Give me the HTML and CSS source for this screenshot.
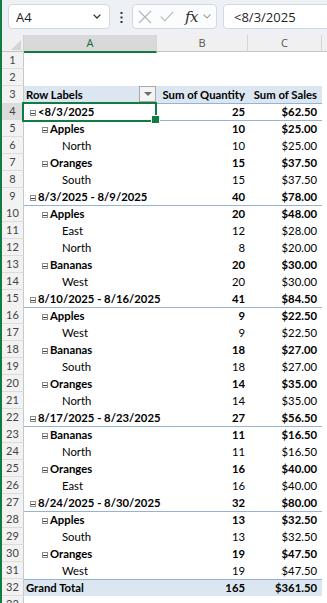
FILE: index.html
```html
<!DOCTYPE html>
<html>
<head>
	<meta http-equiv="content-type" content="text/html; charset=utf-8">
	<meta name="viewport" content="width=device-width, initial-scale=1.0">
	<title>PivotTable</title>
	<link rel="stylesheet" href="styles.css">
</head>
<body>
	<div class="x-bar">
		<div class="x-namebox">
			<span>A4</span>
			<svg width="8" height="5" viewBox="0 0 8 5"><path d="M0.6 0.6 L4 4 L7.4 0.6" fill="none" stroke="#333" stroke-width="1.3"/></svg>
		</div>
		<div class="x-dots">
			<svg width="3" height="11" viewBox="0 0 3 11"><rect x="0.5" y="0" width="2" height="2" fill="#333"/><rect x="0.5" y="4.5" width="2" height="2" fill="#333"/><rect x="0.5" y="9" width="2" height="2" fill="#333"/></svg>
		</div>
		<div class="x-fxbox">
			<svg width="14" height="14" viewBox="0 0 14 14"><path d="M1 1 L13 13 M13 1 L1 13" stroke="#b3b6b9" stroke-width="1.1" fill="none"/></svg>
			<svg width="14" height="11" viewBox="0 0 14 11"><path d="M0.8 5.6 L4.8 9.8 L13.2 0.8" stroke="#b3b6b9" stroke-width="1.1" fill="none"/></svg>
			<span class="x-fx">fx</span>
			<svg width="8" height="5" viewBox="0 0 8 5"><path d="M0.6 0.6 L4 4 L7.4 0.6" fill="none" stroke="#9a9da0" stroke-width="1.1"/></svg>
		</div>
		<div class="x-formula">&lt;8/3/2025</div>
	</div>

	<div class="x-sheet">
		<div class="x-r x-colhead">
			<div class="x-corner"></div>
			<div class="x-ch x-sel">A</div>
			<div class="x-ch">B</div>
			<div class="x-ch">C</div>
			<div class="x-ch x-last"></div>
		</div>

		<div class="x-r"><div class="x-rn">1</div></div>
		<div class="x-r"><div class="x-rn">2</div></div>
		<div class="x-r x-head">
			<div class="x-rn">3</div>
			<div class="x-c x-a">Row Labels<span class="x-filter"></span></div>
			<div class="x-c x-b">Sum of Quantity</div>
			<div class="x-c x-cc">Sum of Sales</div>
		</div>
		<div class="x-r x-l1">
			<div class="x-rn x-rsel">4</div>
			<div class="x-c x-a x-active"><i class="x-tg"></i>&lt;8/3/2025</div>
			<div class="x-c x-b">25</div>
			<div class="x-c x-cc">$62.50</div>
		</div>
		<div class="x-r x-l2"><div class="x-rn">5</div><div class="x-c x-a"><i class="x-tg"></i>Apples</div><div class="x-c x-b">10</div><div class="x-c x-cc">$25.00</div></div>
		<div class="x-r x-l3"><div class="x-rn">6</div><div class="x-c x-a">North</div><div class="x-c x-b">10</div><div class="x-c x-cc">$25.00</div></div>
		<div class="x-r x-l2"><div class="x-rn">7</div><div class="x-c x-a"><i class="x-tg"></i>Oranges</div><div class="x-c x-b">15</div><div class="x-c x-cc">$37.50</div></div>
		<div class="x-r x-l3"><div class="x-rn">8</div><div class="x-c x-a">South</div><div class="x-c x-b">15</div><div class="x-c x-cc">$37.50</div></div>
		<div class="x-r x-l1"><div class="x-rn">9</div><div class="x-c x-a"><i class="x-tg"></i>8/3/2025 - 8/9/2025</div><div class="x-c x-b">40</div><div class="x-c x-cc">$78.00</div></div>
		<div class="x-r x-l2"><div class="x-rn">10</div><div class="x-c x-a"><i class="x-tg"></i>Apples</div><div class="x-c x-b">20</div><div class="x-c x-cc">$48.00</div></div>
		<div class="x-r x-l3"><div class="x-rn">11</div><div class="x-c x-a">East</div><div class="x-c x-b">12</div><div class="x-c x-cc">$28.00</div></div>
		<div class="x-r x-l3"><div class="x-rn">12</div><div class="x-c x-a">North</div><div class="x-c x-b">8</div><div class="x-c x-cc">$20.00</div></div>
		<div class="x-r x-l2"><div class="x-rn">13</div><div class="x-c x-a"><i class="x-tg"></i>Bananas</div><div class="x-c x-b">20</div><div class="x-c x-cc">$30.00</div></div>
		<div class="x-r x-l3"><div class="x-rn">14</div><div class="x-c x-a">West</div><div class="x-c x-b">20</div><div class="x-c x-cc">$30.00</div></div>
		<div class="x-r x-l1"><div class="x-rn">15</div><div class="x-c x-a"><i class="x-tg"></i>8/10/2025 - 8/16/2025</div><div class="x-c x-b">41</div><div class="x-c x-cc">$84.50</div></div>
		<div class="x-r x-l2"><div class="x-rn">16</div><div class="x-c x-a"><i class="x-tg"></i>Apples</div><div class="x-c x-b">9</div><div class="x-c x-cc">$22.50</div></div>
		<div class="x-r x-l3"><div class="x-rn">17</div><div class="x-c x-a">West</div><div class="x-c x-b">9</div><div class="x-c x-cc">$22.50</div></div>
		<div class="x-r x-l2"><div class="x-rn">18</div><div class="x-c x-a"><i class="x-tg"></i>Bananas</div><div class="x-c x-b">18</div><div class="x-c x-cc">$27.00</div></div>
		<div class="x-r x-l3"><div class="x-rn">19</div><div class="x-c x-a">South</div><div class="x-c x-b">18</div><div class="x-c x-cc">$27.00</div></div>
		<div class="x-r x-l2"><div class="x-rn">20</div><div class="x-c x-a"><i class="x-tg"></i>Oranges</div><div class="x-c x-b">14</div><div class="x-c x-cc">$35.00</div></div>
		<div class="x-r x-l3"><div class="x-rn">21</div><div class="x-c x-a">North</div><div class="x-c x-b">14</div><div class="x-c x-cc">$35.00</div></div>
		<div class="x-r x-l1"><div class="x-rn">22</div><div class="x-c x-a"><i class="x-tg"></i>8/17/2025 - 8/23/2025</div><div class="x-c x-b">27</div><div class="x-c x-cc">$56.50</div></div>
		<div class="x-r x-l2"><div class="x-rn">23</div><div class="x-c x-a"><i class="x-tg"></i>Bananas</div><div class="x-c x-b">11</div><div class="x-c x-cc">$16.50</div></div>
		<div class="x-r x-l3"><div class="x-rn">24</div><div class="x-c x-a">North</div><div class="x-c x-b">11</div><div class="x-c x-cc">$16.50</div></div>
		<div class="x-r x-l2"><div class="x-rn">25</div><div class="x-c x-a"><i class="x-tg"></i>Oranges</div><div class="x-c x-b">16</div><div class="x-c x-cc">$40.00</div></div>
		<div class="x-r x-l3"><div class="x-rn">26</div><div class="x-c x-a">East</div><div class="x-c x-b">16</div><div class="x-c x-cc">$40.00</div></div>
		<div class="x-r x-l1"><div class="x-rn">27</div><div class="x-c x-a"><i class="x-tg"></i>8/24/2025 - 8/30/2025</div><div class="x-c x-b">32</div><div class="x-c x-cc">$80.00</div></div>
		<div class="x-r x-l2"><div class="x-rn">28</div><div class="x-c x-a"><i class="x-tg"></i>Apples</div><div class="x-c x-b">13</div><div class="x-c x-cc">$32.50</div></div>
		<div class="x-r x-l3"><div class="x-rn">29</div><div class="x-c x-a">South</div><div class="x-c x-b">13</div><div class="x-c x-cc">$32.50</div></div>
		<div class="x-r x-l2"><div class="x-rn">30</div><div class="x-c x-a"><i class="x-tg"></i>Oranges</div><div class="x-c x-b">19</div><div class="x-c x-cc">$47.50</div></div>
		<div class="x-r x-l3"><div class="x-rn">31</div><div class="x-c x-a">West</div><div class="x-c x-b">19</div><div class="x-c x-cc">$47.50</div></div>
		<div class="x-r x-total"><div class="x-rn">32</div><div class="x-c x-a">Grand Total</div><div class="x-c x-b">165</div><div class="x-c x-cc">$361.50</div></div>
		<div class="x-r"><div class="x-rn">33</div></div>
	</div>
</body>
</html>
```

FILE: styles.css
```css
* {
	box-sizing: border-box;
}

body {
	margin: 0;
	width: 327px;
	height: 603px;
	overflow: hidden;
	background-color: #ffffff;
	border-left: 2px solid #107c41;
	font-family: Lato, 'Noto Sans', sans-serif;
	font-size: 11.3px;
	color: #000;
}

/*Formula bar*/

.x-bar {
	display: flex;
	align-items: center;
	height: 35px;
	padding: 0 0 2px 6px;
	background-color: #edf1f5;
	font-family: 'Open Sans', 'Noto Sans', sans-serif;
	font-size: 13px;
	color: #1f1f1f;
	white-space: nowrap;
}

.x-namebox,
.x-fxbox,
.x-formula {
	display: flex;
	align-items: center;
	height: 25px;
	background-color: #ffffff;
	border: 1px solid #d3d8de;
	border-radius: 4px;
}

.x-namebox {
	width: 102px;
	justify-content: space-between;
	padding: 0 8px 0 7px;
}

.x-dots {
	display: flex;
	width: 22px;
	justify-content: center;
	padding-top: 1px;
}

.x-fxbox {
	width: 85px;
	padding-left: 5px;
	gap: 8px;
	background-color: #fbfcfd;
}

.x-fx {
	font-family: 'DejaVu Serif', 'Liberation Serif', serif;
	font-style: italic;
	font-size: 15px;
	color: #2b2b2b;
	margin-left: 3px;
	margin-right: -3px;
	letter-spacing: -0.5px;
}

.x-formula {
	flex: 1;
	margin-left: 6px;
	margin-right: -6px;
	padding-left: 10px;
}

/*Grid*/

.x-r {
	display: grid;
	grid-template-columns: 22px 133px 91px 74px 1fr;
	height: 17px;
}

.x-colhead {
	height: 17px;
	background-color: #f0f0f0;
	border-bottom: 1px solid #c4c4c4;
	color: #555;
	font-family: 'Open Sans', 'Noto Sans', sans-serif;
	font-size: 11px;
}

.x-corner {
	position: relative;
	border-right: 1px solid #d0d0d0;
}

.x-corner::after {
	content: '';
	position: absolute;
	right: 2px;
	bottom: 2px;
	border-style: solid;
	border-width: 0 0 10px 10px;
	border-color: transparent transparent #d4d4d4 transparent;
}

.x-ch {
	text-align: center;
	line-height: 16px;
	border-right: 1px solid #d4d4d4;
}

.x-ch.x-sel {
	background-color: #d9d9d9;
	color: #0f6b38;
	border-bottom: 2px solid #107c41;
	margin-bottom: -1px;
}

.x-ch.x-last {
	border-right: none;
}

.x-rn {
	background-color: #f2f2f2;
	border-right: 1px solid #c8c8c8;
	border-bottom: 1px solid #dcdcdc;
	text-align: center;
	line-height: 16px;
	font-size: 11px;
	color: #444;
}

.x-rn.x-rsel {
	background-color: #dcdcdc;
}

.x-c {
	padding: 1px 3px 0 2px;
	line-height: 16px;
	white-space: nowrap;
	overflow: visible;
}

.x-b {
	text-align: right;
}

.x-cc {
	text-align: right;
	padding-right: 5px;
}

/*Pivot styles*/

.x-head .x-c {
	background-color: #dce6f1;
	border-bottom: 1px solid #95b3d7;
	font-weight: bold;
}

.x-head .x-a {
	display: flex;
	justify-content: space-between;
	padding-right: 1px;
}

.x-filter {
	position: relative;
	width: 17px;
	height: 16px;
	margin-top: -1px;
	background-color: #f4f4f4;
	border: 1px solid #a9a9a9;
}

.x-filter::after {
	content: '';
	position: absolute;
	left: 4px;
	top: 5px;
	border-style: solid;
	border-width: 4px 4px 0 4px;
	border-color: #6d6d6d transparent transparent transparent;
}

.x-l1 .x-c {
	font-weight: bold;
	border-bottom: 1px solid #95b3d7;
}

.x-l2 .x-c {
	font-weight: bold;
}

.x-l2 .x-a {
	padding-left: 14px;
}

.x-l3 .x-a {
	padding-left: 38px;
}

.x-tg {
	display: inline-block;
	position: relative;
	width: 6px;
	height: 6px;
	margin: 0 2px 0 4px;
	vertical-align: 0;
	border: 1px solid #8c8c8c;
	background-color: #ffffff;
}

.x-tg::after {
	content: '';
	position: absolute;
	left: 0;
	right: 0;
	top: 1.5px;
	height: 1px;
	background-color: #404040;
}

.x-total .x-c {
	background-color: #dce6f1;
	border-top: 1px solid #95b3d7;
	padding-top: 0;
	font-weight: bold;
}

/*Active cell*/

.x-active {
	position: relative;
}

.x-active::after {
	content: '';
	position: absolute;
	left: -2px;
	top: -1px;
	right: 0;
	bottom: -2px;
	border: 2px solid #107c41;
	z-index: 2;
}

.x-active::before {
	content: '';
	position: absolute;
	right: -3px;
	bottom: -4px;
	width: 7px;
	height: 7px;
	background-color: #107c41;
	border: 1px solid #ffffff;
	z-index: 3;
}
```
